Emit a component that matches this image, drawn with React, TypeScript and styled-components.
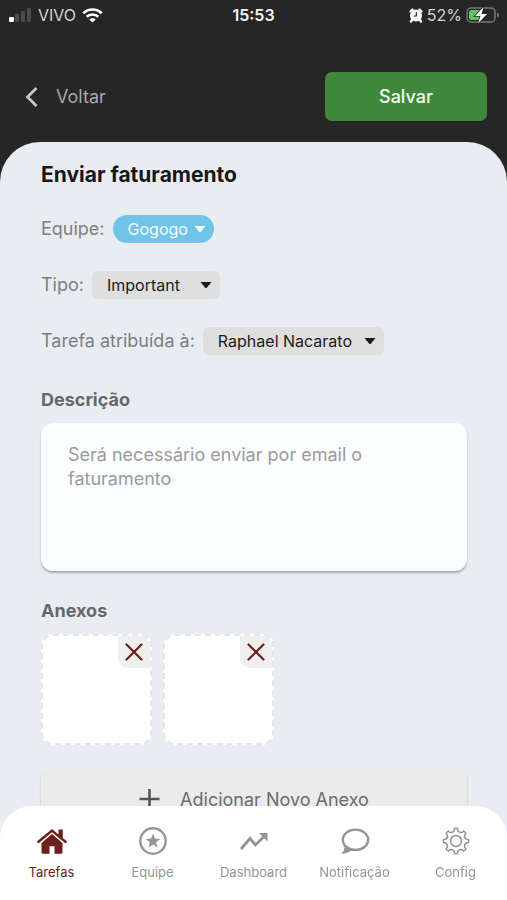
import React, { useState } from "react";
import styled, { createGlobalStyle } from "styled-components";

const GlobalStyle = createGlobalStyle`
  *, *::before, *::after { box-sizing: border-box; }
  body { margin: 0; background: #262626; }
  body, button, select, textarea {
    font-family: Inter, "Liberation Sans", sans-serif;
  }
`;

const Shell = styled.div`
  position: relative;
  display: flex;
  flex-direction: column;
  height: 100vh;
  overflow: hidden;
  background: #262626;
`;

const StatusBar = styled.div`
  display: grid;
  grid-template-columns: 1fr auto 1fr;
  align-items: center;
  height: 30px;
  padding: 0 8px;
  color: #f4f4f4;
  font-size: 16px;
  line-height: 20px;
`;

const StatusGroup = styled.div<{ $end?: boolean }>`
  display: flex;
  align-items: center;
  justify-content: ${(p) => (p.$end ? "flex-end" : "flex-start")};
  gap: ${(p) => (p.$end ? 4 : 6)}px;
  color: #d4d4d4;
`;

const Clock = styled.time`
  font-weight: 600;
`;

const Header = styled.header`
  display: flex;
  align-items: center;
  justify-content: space-between;
  padding: 42px 20px 21px 24px;
`;

const BackButton = styled.button`
  display: flex;
  align-items: center;
  gap: 17px;
  padding: 0;
  border: 0;
  background: none;
  color: #a9a9a9;
  font-size: 18px;
  line-height: 24px;
  cursor: pointer;
`;

const SaveButton = styled.button`
  width: 35%;
  min-width: 120px;
  height: 49px;
  border: 0;
  border-radius: 7px;
  background: #41883c;
  color: #f4faf3;
  font-size: 18px;
  font-weight: 500;
  cursor: pointer;
`;

const Panel = styled.main`
  flex: 1;
  min-height: 0;
  overflow-y: auto;
  scrollbar-width: none;
  padding: 20px 40px 110px 41px;
  border-radius: 40px 40px 0 0;
  background: #e9edf1;
`;

const Title = styled.h1`
  margin: 0 0 27px;
  color: #15181b;
  font-size: 21px;
  font-weight: 700;
  line-height: 26px;
`;

const FieldList = styled.div`
  display: grid;
  gap: 28px;
  margin-bottom: 33px;
`;

const Field = styled.div`
  display: flex;
  align-items: center;
  gap: 8px;
  height: 28px;
`;

const FieldLabel = styled.label`
  color: #7c7f82;
  font-size: 18px;
  line-height: 28px;
`;

const SelectBox = styled.div<{ $pill?: boolean }>`
  display: grid;
  align-items: center;
  min-width: ${(p) => (p.$pill ? 100 : 128)}px;
  height: 28px;
  border-radius: ${(p) => (p.$pill ? 14 : 6)}px;
  background: ${(p) => (p.$pill ? "#70c4ea" : "#dfdfdf")};
  color: ${(p) => (p.$pill ? "#f5fbff" : "#1b1b1b")};

  & > * { grid-area: 1 / 1; }
`;

const Select = styled.select<{ $pill?: boolean }>`
  appearance: none;
  field-sizing: content;
  height: 28px;
  padding: 0 ${(p) => (p.$pill ? 26 : 32)}px 0 15px;
  border: 0;
  border-radius: inherit;
  background: none;
  color: inherit;
  font-size: 16px;
  cursor: pointer;

  option { color: #1b1b1b; }
`;

const Caret = styled.svg`
  justify-self: end;
  margin-right: 8px;
  pointer-events: none;
`;

const SectionLabel = styled.label`
  display: block;
  margin-bottom: 11px;
  color: #65686b;
  font-size: 18px;
  font-weight: 700;
  line-height: 24px;
`;

const SectionTitle = styled(SectionLabel).attrs({ as: "h2" })`
  margin-top: 0;
`;

const Description = styled.textarea`
  display: block;
  width: 100%;
  height: 148px;
  margin-bottom: 28px;
  padding: 20px 27px;
  border: 0;
  border-radius: 12px;
  outline: 0;
  resize: none;
  background: #fcfdfe;
  box-shadow: 0 2px 2px rgba(0, 0, 0, 0.28);
  color: #9b9b9b;
  font-size: 18px;
  line-height: 24px;
`;

const Attachments = styled.div`
  display: flex;
  gap: 11px;
  margin-bottom: 24px;
`;

const Attachment = styled.div`
  display: flex;
  align-items: flex-start;
  justify-content: flex-end;
  width: 111px;
  height: 111px;
  overflow: hidden;
  border: 2px dashed #e4e7e8;
  border-radius: 12px;
  background: #fff;
`;

const RemoveButton = styled.button`
  display: grid;
  place-items: center;
  width: 32px;
  height: 32px;
  padding: 0;
  border: 0;
  border-radius: 0 0 0 10px;
  background: #efefef;
  color: #6b211c;
  cursor: pointer;
`;

const AddButton = styled.button`
  display: flex;
  align-items: center;
  justify-content: center;
  gap: 20px;
  width: 100%;
  height: 60px;
  border: 0;
  border-radius: 8px;
  background: #ebebeb;
  box-shadow: 0 2px 2px rgba(0, 0, 0, 0.25);
  color: #6c6c6c;
  font-size: 18px;
  cursor: pointer;
`;

const TabBar = styled.nav`
  position: absolute;
  right: 0;
  bottom: 0;
  left: 0;
  display: grid;
  grid-template-columns: repeat(5, 1fr);
  height: 94px;
  padding: 19px 1px 0;
  border-radius: 32px 32px 0 0;
  background: #fff;
`;

const Tab = styled.a<{ $active?: boolean }>`
  display: flex;
  flex-direction: column;
  align-items: center;
  gap: 6px;
  color: ${(p) => (p.$active ? "#6b211c" : "#959595")};
  font-size: 13px;
  line-height: 18px;
  text-decoration: none;
`;

const SignalIcon = () => (
  <svg width="24" height="16" viewBox="0 0 24 16" aria-hidden="true">
    <rect x="1" y="10" width="5" height="5" rx="1" fill="#fff" />
    <rect x="7" y="7" width="4" height="8" rx="1" fill="#4c4c4c" />
    <rect x="13" y="4" width="4" height="11" rx="1" fill="#4c4c4c" />
    <rect x="19" y="1" width="4" height="14" rx="1" fill="#4c4c4c" />
  </svg>
);

const WifiIcon = () => (
  <svg width="21" height="15" viewBox="0 0 21 15" fill="none" stroke="#fff" strokeWidth="2.6" aria-hidden="true">
    <path d="M1.3 5.3a13.2 13.2 0 0 1 18.4 0" />
    <path d="M4.7 8.8a8.4 8.4 0 0 1 11.6 0" />
    <path d="M10.5 14.6 7.3 11.5a4.6 4.6 0 0 1 6.4 0z" fill="#fff" stroke="none" />
  </svg>
);

const AlarmIcon = () => (
  <svg width="14" height="15" viewBox="0 0 14 15" aria-hidden="true">
    <path d="M1.500 3.500 3.500 1.500M12.500 3.500 10.500 1.500M3 12l-1 1.500M11 12l1 1.500" stroke="#fff" strokeWidth="2.400" strokeLinecap="round" fill="none" />
    <circle cx="7" cy="7.5" r="6" fill="#fff" />
    <path d="M7.3 4v4H4.5" stroke="#262626" strokeWidth="1.2" fill="none" />
  </svg>
);

const BatteryIcon = () => (
  <svg width="33" height="18" viewBox="0 0 33 18" aria-hidden="true">
    <rect x="1" y="2" width="28" height="14" rx="4" fill="none" stroke="#777" strokeWidth="1.5" />
    <path d="M5.5 4H15v10H5.5A2.5 2.5 0 0 1 3 11.5v-5A2.5 2.5 0 0 1 5.5 4z" fill="#5fc95b" />
    <path d="M31 6.5v5q2-.8 2-2.5t-2-2.5z" fill="#777" />
    <path d="M17.5 1 9 10h5.5L12 17.5 21 8h-5.5z" fill="#fff" stroke="#262626" strokeWidth="1.6" paintOrder="stroke" />
  </svg>
);

const BackIcon = () => (
  <svg width="15" height="22" viewBox="0 0 15 22" fill="none" stroke="#c6c6c6" strokeWidth="2.8" aria-hidden="true">
    <path d="M12.5 2 3.5 11l9 9" />
  </svg>
);

const CaretIcon = () => (
  <Caret width="12" height="8" viewBox="0 0 12 8" aria-hidden="true">
    <path d="M.5 1h11L7 6.5q-1 1-2 0z" fill="currentColor" />
  </Caret>
);

const CloseIcon = () => (
  <svg width="18" height="18" viewBox="0 0 18 18" fill="none" stroke="currentColor" strokeWidth="2.2" strokeLinecap="round" aria-hidden="true">
    <path d="m1.5 1.5 15 15M16.5 1.5l-15 15" />
  </svg>
);

const PlusIcon = () => (
  <svg width="21" height="20" viewBox="0 0 21 20" fill="none" stroke="#555" strokeWidth="2.6" aria-hidden="true">
    <path d="M10.5 0v20M.5 10h20" />
  </svg>
);

const HomeIcon = () => (
  <svg width="32" height="32" viewBox="0 0 32 32" fill="currentColor" aria-hidden="true">
    <path d="M16 4 .8 16.6l1.6 1.9L16 7.3l13.6 11.2 1.6-1.9-4.4-3.7V4.600h-4.300v4.800z" />
    <path d="m16 8.900-10.500 9V27.500q0 1.300 1.300 1.300h6.700v-7.500h5v7.500h6.700q1.300 0 1.300-1.300v-9.600z" />
  </svg>
);

const StarIcon = () => (
  <svg width="32" height="32" viewBox="0 0 32 32" aria-hidden="true">
    <circle cx="16" cy="16" r="12.700" fill="none" stroke="currentColor" strokeWidth="2.400" />
    <path d="m16 8.600 1.900 5 5.400.3-4.200 3.400 1.400 5.200-4.500-2.900-4.500 2.900 1.400-5.200-4.200-3.400 5.400-.3z" fill="currentColor" />
  </svg>
);

const TrendIcon = () => (
  <svg width="32" height="32" viewBox="0 0 32 32" aria-hidden="true">
    <path d="m3 24 9-10.500 5.500 6.500L27 10.500" fill="none" stroke="currentColor" strokeWidth="2.800" />
    <path d="M21 8h8.500v8.500z" fill="currentColor" />
  </svg>
);

const BubbleIcon = () => (
  <svg width="32" height="32" viewBox="0 0 32 32" aria-hidden="true">
    <ellipse cx="16.500" cy="14.800" rx="12.700" ry="10.200" fill="none" stroke="currentColor" strokeWidth="2.400" />
    <path d="M5.500 20.500c.4 3.300-.8 6-3.200 8.500 4.200-.2 7.800-1.500 10.700-4.200z" fill="currentColor" />
  </svg>
);

const gearPath = (() => {
  const at = (r: number, deg: number) => {
    const a = (deg * Math.PI) / 180;
    return `${(16 + r * Math.sin(a)).toFixed(2)} ${(16 - r * Math.cos(a)).toFixed(2)}`;
  };
  let d = `M${at(12.6, -7)}`;
  for (let k = 0; k < 360; k += 45) {
    d += `Q${at(13, k)} ${at(12.6, k + 7)}L${at(10.6, k + 10)}Q${at(8.6, k + 22)} ${at(10.6, k + 35)}L${at(12.6, k + 38)}`;
  }
  return d + "Z";
})();

const GearIcon = () => (
  <svg width="32" height="32" viewBox="0 0 32 32" fill="none" stroke="currentColor" strokeWidth="1.5" strokeLinejoin="round" aria-hidden="true">
    <path d={gearPath} />
    <circle cx="16" cy="16" r="5.5" />
  </svg>
);

const fields = [
  { id: "equipe", label: "Equipe:", value: "Gogogo", pill: true },
  { id: "tipo", label: "Tipo:", value: "Important" },
  { id: "responsavel", label: "Tarefa atribuída à:", value: "Raphael Nacarato" },
];

const tabs = [
  { label: "Tarefas", Icon: HomeIcon, active: true },
  { label: "Equipe", Icon: StarIcon },
  { label: "Dashboard", Icon: TrendIcon },
  { label: "Notificação", Icon: BubbleIcon },
  { label: "Config", Icon: GearIcon },
];

export default function App() {
  const [attachments, setAttachments] = useState([1, 2]);

  return (
    <Shell>
      <GlobalStyle />
      <StatusBar>
        <StatusGroup>
          <SignalIcon />
          <span>VIVO</span>
          <WifiIcon />
        </StatusGroup>
        <Clock>15:53</Clock>
        <StatusGroup $end>
          <AlarmIcon />
          <span>52%</span>
          <BatteryIcon />
        </StatusGroup>
      </StatusBar>
      <Header>
        <BackButton type="button">
          <BackIcon />
          Voltar
        </BackButton>
        <SaveButton type="button">Salvar</SaveButton>
      </Header>
      <Panel>
        <Title>Enviar faturamento</Title>
        <FieldList>
          {fields.map((f) => (
            <Field key={f.id}>
              <FieldLabel htmlFor={f.id}>{f.label}</FieldLabel>
              <SelectBox $pill={f.pill}>
                <Select id={f.id} $pill={f.pill}>
                  <option>{f.value}</option>
                </Select>
                <CaretIcon />
              </SelectBox>
            </Field>
          ))}
        </FieldList>
        <SectionLabel htmlFor="descricao">Descrição</SectionLabel>
        <Description id="descricao" defaultValue="Será necessário enviar por email o faturamento" />
        <SectionTitle>Anexos</SectionTitle>
        <Attachments>
          {attachments.map((id) => (
            <Attachment key={id}>
              <RemoveButton
                type="button"
                aria-label={`Remover anexo ${id}`}
                onClick={() => setAttachments(attachments.filter((a) => a !== id))}
              >
                <CloseIcon />
              </RemoveButton>
            </Attachment>
          ))}
        </Attachments>
        <AddButton type="button" onClick={() => setAttachments([...attachments, Math.max(0, ...attachments) + 1])}>
          <PlusIcon />
          Adicionar Novo Anexo
        </AddButton>
      </Panel>
      <TabBar>
        {tabs.map(({ label, Icon, active }) => (
          <Tab key={label} href="#" $active={active} aria-current={active ? "page" : undefined}>
            <Icon />
            {label}
          </Tab>
        ))}
      </TabBar>
    </Shell>
  );
}
